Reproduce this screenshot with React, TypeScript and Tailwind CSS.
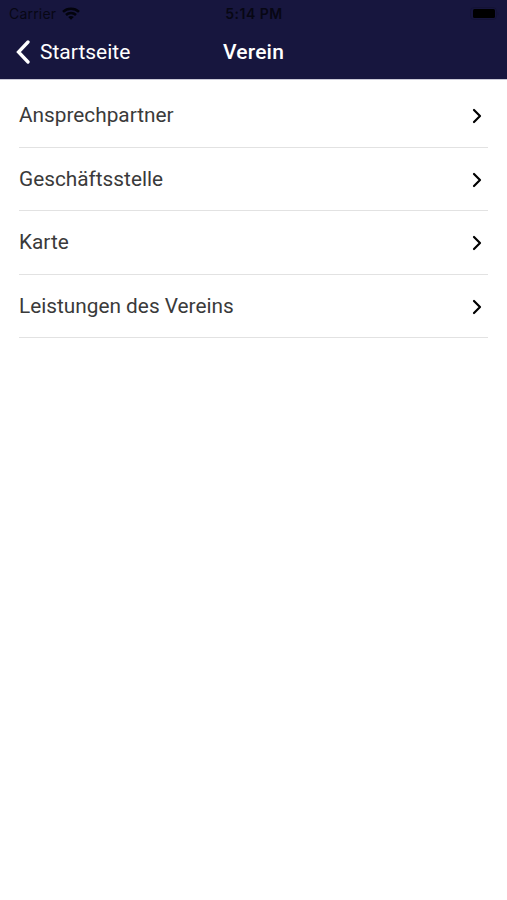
import React from 'react';

interface MenuItem {
  id: string;
  label: string;
}

const menuItems: MenuItem[] = [
  { id: 'contacts', label: 'Ansprechpartner' },
  { id: 'office', label: 'Geschäftsstelle' },
  { id: 'map', label: 'Karte' },
  { id: 'services', label: 'Leistungen des Vereins' },
];

const WifiIcon: React.FC = () => (
  <svg className="-mt-px" width="18" height="13" viewBox="0 0 18 13" fill="none" stroke="#03030c" strokeWidth="2.5">
    <path d="M1 4.8C5.4 0.6 12.6 0.6 17 4.8" />
    <path d="M4 8C6.8 5.3 11.2 5.3 14 8" />
    <path d="M9 12.8L6.2 10C7.8 8.5 10.2 8.5 11.8 10Z" fill="#03030c" stroke="none" />
  </svg>
);

const StatusBar: React.FC = () => (
  <div className="grid h-[27px] grid-cols-3 items-center pl-[9px] pr-[8px] font-['Inter',sans-serif] text-[14px] text-[#070714]">
    <div className="flex items-center gap-[6px]">
      <span className="tracking-[0.2px]">Carrier</span>
      <WifiIcon />
    </div>
    <span className="text-center font-semibold tracking-[0.5px]">5:14 PM</span>
    <svg className="justify-self-end" width="29" height="14" viewBox="0 0 29 14">
      <rect x="0.5" y="0.5" width="26" height="12" rx="3.5" fill="none" stroke="black" strokeOpacity="0.12" />
      <rect x="3" y="2" width="22" height="9" rx="1.5" fill="black" />
      <path d="M27.5 4.5C29 5.3 29 8 27.5 8.8Z" fill="black" fillOpacity="0.12" />
    </svg>
  </div>
);

export default function App() {
  return (
    <div className="min-h-screen bg-white font-['Roboto',sans-serif]">
      <header className="h-[79px] bg-[#17163e]">
        <StatusBar />
        <div className="grid h-[51px] grid-cols-3 items-center text-[21px] text-white">
          <button className="flex items-center gap-[9px] pl-[16px]">
            <svg
              className="-ml-px mr-px -mt-px"
              width="15"
              height="24"
              viewBox="0 0 15 24"
              fill="none"
              stroke="white"
              strokeWidth="3.3"
              strokeLinecap="round"
            >
              <path d="M13 2L3.5 12L13 22" />
            </svg>
            Startseite
          </button>
          <h1 className="text-center font-medium tracking-[0.2px]">Verein</h1>
        </div>
      </header>
      <ul className="border-t border-[#c9c9d6] px-[19px] pt-[4px]">
        {menuItems.map((item) => (
          <li
            key={item.id}
            className="flex h-[63.5px] items-center justify-between border-b border-[#e2e2e2] pt-px pr-[6px] text-[20.8px] text-[#3a3a3a]"
          >
            {item.label}
            <svg
              className="mt-px"
              width="10"
              height="16"
              viewBox="0 0 10 16"
              fill="none"
              stroke="black"
              strokeWidth="2.2"
              strokeLinecap="round"
              strokeLinejoin="round"
            >
              <path d="M2 2L8 8L2 14" />
            </svg>
          </li>
        ))}
      </ul>
    </div>
  );
}
